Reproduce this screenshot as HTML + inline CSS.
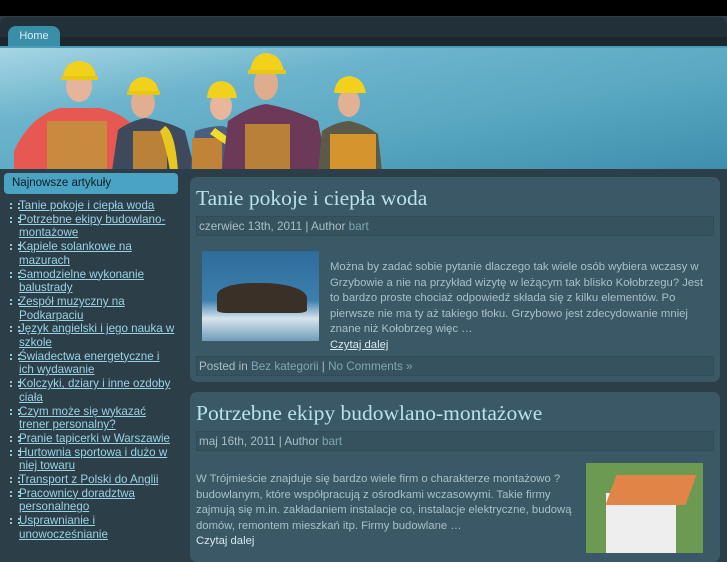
<!DOCTYPE html>
<html><head><meta charset="utf-8"><style>
*{margin:0;padding:0;box-sizing:border-box}
body{width:727px;height:545px;overflow:hidden;background:#2c3e48;font-family:"Liberation Sans",sans-serif;position:relative}
.top{position:absolute;left:0;top:0;width:727px;height:16px;background:#000}
.nav{position:absolute;left:0;top:16px;width:727px;height:30px;background:#223039;border-radius:8px 8px 0 0;border-top:1px solid #2e3e48}
.nav .strip{position:absolute;left:0;top:20px;width:727px;height:10px;background:#1b262d}
.tab{position:absolute;left:8px;top:9px;width:52px;height:21px;background:#3a8ea8;border-radius:8px 8px 0 0;color:#d8eef4;font-size:11px;text-align:center;line-height:20px}
.hdr{position:absolute;left:0;top:46px;width:727px;height:123px;background:linear-gradient(170deg,#a6d6e4 0%,#6cb4cc 30%,#5aa8c2 60%,#3f8eac 100%);border-top:2px solid #4b9cb8}
.title{position:absolute;left:411px;top:127px;font-size:24px;color:#d6eef4}
.side{position:absolute;left:4px;top:173px;width:174px;height:21px;background:#4aa3c2;border-radius:4px;font-size:11.5px;color:#0f1e26;padding:4px 0 0 8px}
ul{position:absolute;left:8px;top:199px;width:168px;list-style:none;font-size:11.6px;line-height:13.7px}
li{padding-left:11px;position:relative}
li:before{content:"";position:absolute;left:2px;top:4px;width:6px;height:6px;border-left:2px dotted #8fc6d8;border-right:2px dotted #8fc6d8}
li a{color:#9ad2e6;text-decoration:underline}
.post{position:absolute;left:190px;width:530px;background:#3b5866;border-radius:7px}
.post h2{font-family:"Liberation Serif",serif;font-weight:normal;font-size:21.5px;color:#b8e2ec;padding:9px 0 0 6px}
.meta{margin:5px 6px 0 6px;height:20px;background:#37525f;border:1px dotted #2e4552;font-size:11.7px;color:#a8bfc6;padding:3px 2px}
.meta span{color:#7fa6b3}
.txt{font-size:11.3px;line-height:15.6px;color:#a8c0c7}
.txt a{color:#d6e8ee;text-decoration:underline}
</style></head><body>
<div class="top"></div>
<div class="nav"><div class="strip"></div><div class="tab">Home</div></div>
<div class="hdr">
<svg width="400" height="123" style="position:absolute;left:0;top:-2px">
<path d="M14 105 Q30 70 60 62 L100 62 Q135 70 146 100 L140 125 L14 125Z" fill="#e85852"/>
<rect x="47" y="75" width="60" height="50" fill="#c88a3e"/>
<ellipse cx="79" cy="40" rx="13" ry="16" fill="#e6b49a"/>
<path d="M63 32 Q64 16 79 15 Q95 16 96 32Z" fill="#f2d11c"/><rect x="61" y="30" width="37" height="4" fill="#e8c614"/>
<path d="M112 125 L118 84 Q130 75 145 72 Q170 76 185 85 L195 125Z" fill="#3e4a5c"/>
<rect x="133" y="85" width="34" height="40" fill="#b98238"/>
<path d="M165 80 Q175 85 178 125 L170 125 Q166 100 160 85Z" fill="#e8c820"/>
<ellipse cx="143" cy="57" rx="12" ry="15" fill="#e0ae90"/>
<path d="M128 47 Q130 32 143 31 Q157 32 159 47Z" fill="#f2d11c"/><rect x="127" y="45" width="33" height="4" fill="#e8c614"/>
<path d="M190 125 L195 85 Q210 80 222 80 Q232 82 235 90 L232 125Z" fill="#4b5e80"/>
<rect x="192" y="92" width="30" height="33" fill="#c08338"/>
<ellipse cx="221" cy="60" rx="11" ry="14" fill="#e8b69a"/>
<path d="M207 52 Q208 36 221 35 Q235 36 237 52Z" fill="#f2d11c"/>
<path d="M215 82 L275 125 L265 125 L210 88Z" fill="#f0dc2a"/>
<path d="M222 125 L228 75 Q250 60 266 58 Q290 62 318 75 L328 125Z" fill="#6c3a58"/>
<rect x="245" y="78" width="45" height="47" fill="#b9803a"/>
<ellipse cx="266" cy="38" rx="12" ry="16" fill="#e0ac8e"/>
<path d="M250 26 Q252 8 266 7 Q281 8 284 26Z" fill="#f2d11c"/><rect x="248" y="24" width="38" height="4" fill="#e8c614"/>
<path d="M318 125 L322 85 Q335 76 349 75 Q365 78 378 88 L382 125Z" fill="#5b5a48"/>
<rect x="330" y="88" width="46" height="37" fill="#d5942e"/>
<ellipse cx="349" cy="57" rx="11" ry="14" fill="#e2b092"/>
<path d="M334 47 Q336 31 349 30 Q363 31 366 47Z" fill="#f2d11c"/>
</svg>
<div class="title">budownictwoxxl</div>
</div>
<div class="side">Najnowsze artykuły</div>
<ul>
<li><a>Tanie pokoje i ciepła woda</a></li>
<li><a>Potrzebne ekipy budowlano-montażowe</a></li>
<li><a>Kąpiele solankowe na mazurach</a></li>
<li><a>Samodzielne wykonanie balustrady</a></li>
<li><a>Zespół muzyczny na Podkarpaciu</a></li>
<li><a>Język angielski i jego nauka w szkole</a></li>
<li><a>Świadectwa energetyczne i ich wydawanie</a></li>
<li><a>Kolczyki, dziary i inne ozdoby ciała</a></li>
<li><a>Czym może się wykazać trener personalny?</a></li>
<li><a>Pranie tapicerki w Warszawie</a></li>
<li><a>Hurtownia sportowa i dużo w niej towaru</a></li>
<li><a>Transport z Polski do Anglii</a></li>
<li><a>Pracownicy doradztwa personalnego</a></li>
<li><a>Usprawnianie i unowocześnianie</a></li>
</ul>
<div class="post" style="top:177px;height:205px">
<h2>Tanie pokoje i ciepła woda</h2>
<div class="meta">czerwiec 13th, 2011 | Author <span>bart</span></div>
<div style="position:absolute;left:12px;top:74px;width:117px;height:90px;background:linear-gradient(#2f6c9a,#3c7fae 55%,#d8e4ec 75%,#6f9cba)">
<div style="position:absolute;left:15px;top:32px;width:90px;height:30px;background:#3a3028;border-radius:40% 50% 10% 10%"></div></div>
<div class="txt" style="position:absolute;left:140px;top:83px;width:380px">Można by zadać sobie pytanie dlaczego tak wiele osób wybiera wczasy w Grzybowie a nie na przykład wizytę w leżącym tak blisko Kołobrzegu? Jest to bardzo proste chociaż odpowiedź składa się z kilku elementów. Po pierwsze nie ma ty aż takiego tłoku. Grzybowo jest zdecydowanie mniej znane niż Kołobrzeg więc …<br><a>Czytaj dalej</a></div>
<div class="meta" style="position:absolute;left:0;top:179px;width:518px;margin:0 6px">Posted in <span>Bez kategorii</span> | <span>No Comments »</span></div>
</div>
<div class="post" style="top:392px;height:170px">
<h2>Potrzebne ekipy budowlano-montażowe</h2>
<div class="meta">maj 16th, 2011 | Author <span>bart</span></div>
<div style="position:absolute;left:396px;top:71px;width:117px;height:90px;background:#6d9a52">
<div style="position:absolute;left:20px;top:30px;width:70px;height:60px;background:#eeeeee"></div>
<div style="position:absolute;left:25px;top:12px;width:80px;height:30px;background:#e08448;transform:skewX(-20deg)"></div></div>
<div class="txt" style="position:absolute;left:6px;top:80px;width:388px">W Trójmieście znajduje się bardzo wiele firm o charakterze montażowo ? budowlanym, które współpracują z ośrodkami wczasowymi. Takie firmy zajmują się m.in. zakładaniem instalacje co, instalacje elektryczne, budową domów, remontem mieszkań itp. Firmy budowlane …<br><a style="text-decoration:none">Czytaj dalej</a></div>
</div>
</body></html>
